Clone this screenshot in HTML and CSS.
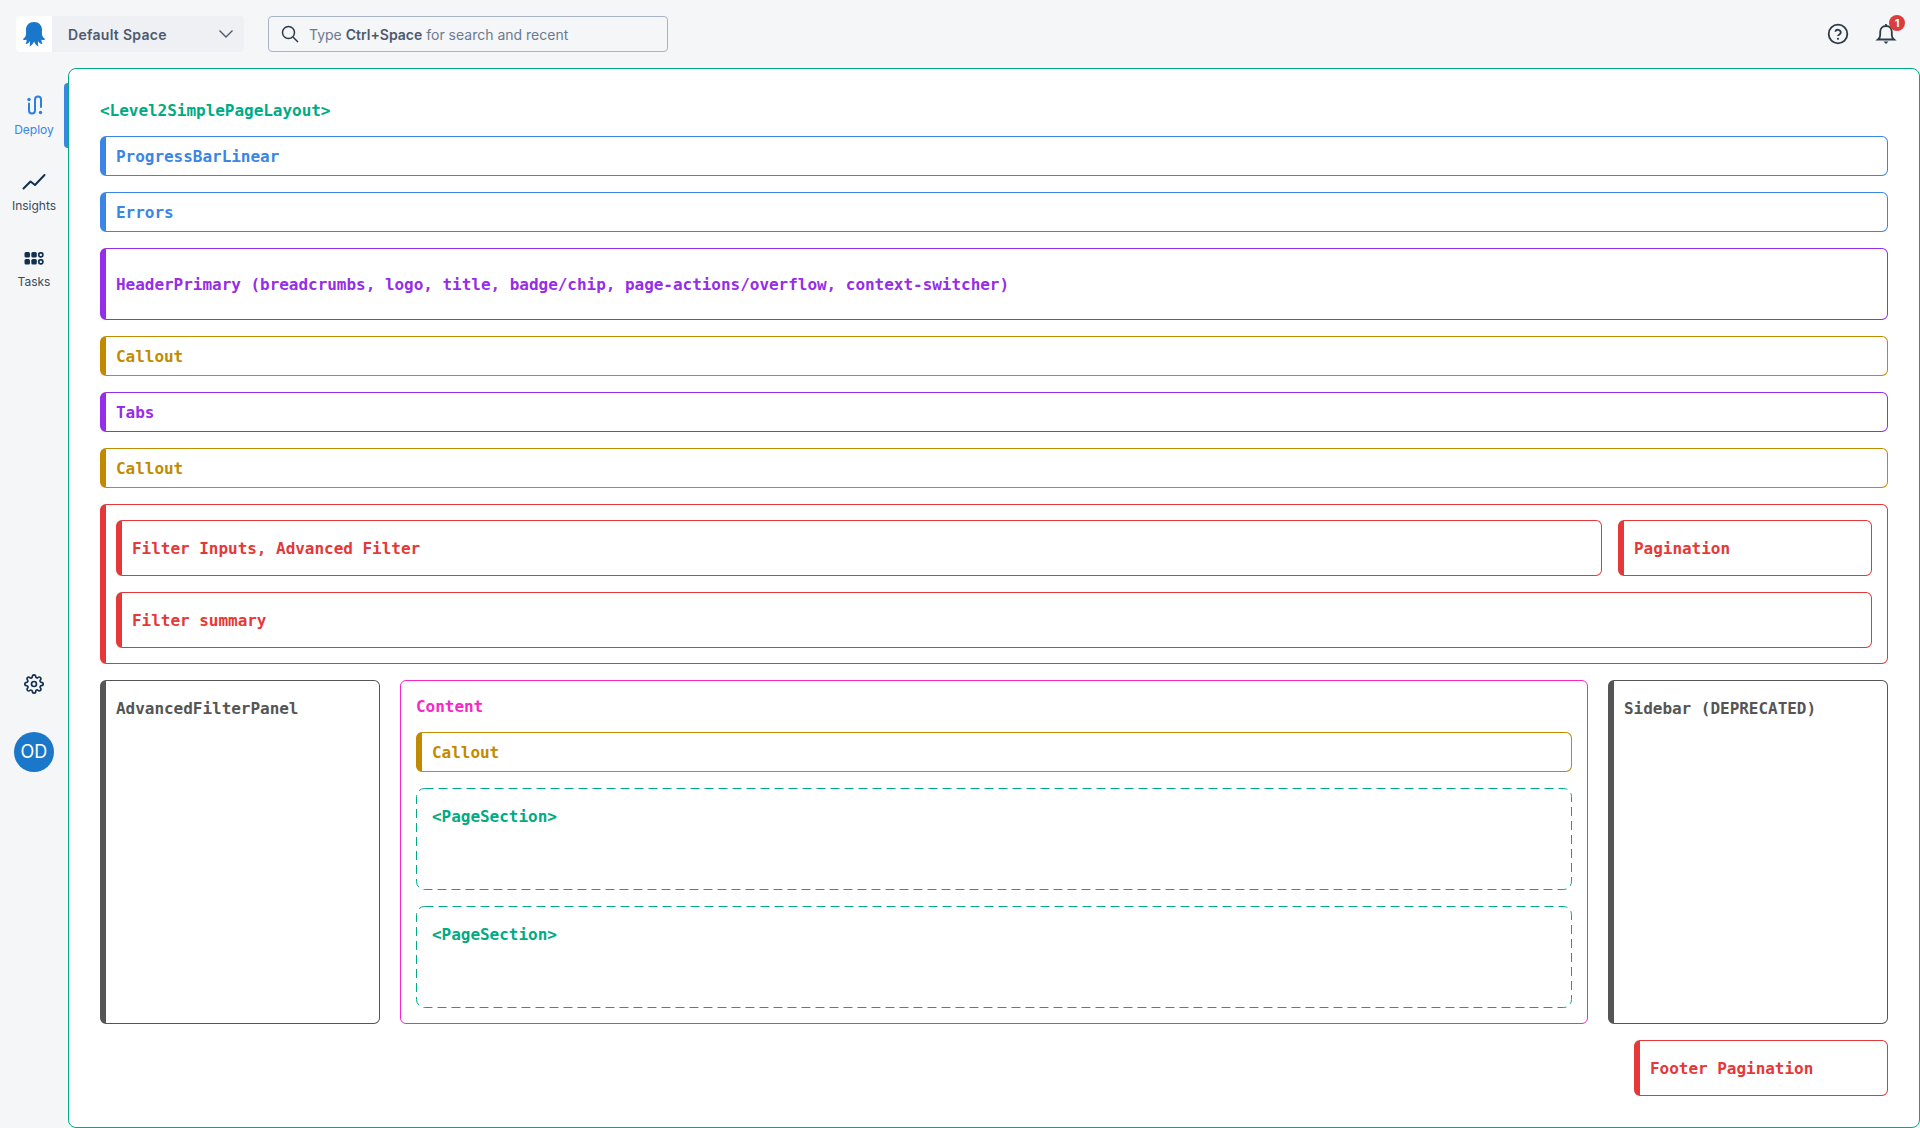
FILE: index.html
```html
<!DOCTYPE html>
<html lang="en">
<head>
<meta charset="utf-8">
<title>Level2SimplePageLayout</title>
<link rel="stylesheet" href="styles.css">
</head>
<body>
<header class="topbar">
  <div class="space-switch">
    <div class="logo">
      <svg width="22" height="26" viewBox="0 0 22 26"><path class="logo-shape" d="M11 1C16 1 19 4.500 19 9C19 12 18.500 14 20 16C20.600 17 21.500 17.500 22 18C22 19 20 19.500 18.500 18.500C18.200 20.500 19 22 19.500 23C18 23.500 15.500 21.500 15 20C14.800 22 15 24 15.500 25.500C13.800 25 12 23 11 20.500C10 23 8.200 25 6.500 25.500C7 24 7.200 22 7 20C6.500 21.500 4 23.500 2.500 23C3 22 3.800 20.500 3.500 18.500C2 19.500 0 19 0 18C.5 17.500 1.400 17 2 16C3.500 14 3 12 3 9C3 4.500 6 1 11 1Z"/></svg>
    </div>
    <div class="space-select">
      <span>Default Space</span>
      <svg width="16" height="16" viewBox="0 0 16 16"><path class="chevron" d="M1.500 4.500 8 11l6.500-6.500"/></svg>
    </div>
  </div>
  <div class="search">
    <svg width="18" height="18" viewBox="0 0 18 18"><circle class="ink" cx="7.500" cy="7.500" r="6"/><path class="ink" d="m12 12 5 5"/></svg>
    <span>Type <b>Ctrl+Space</b> for search and recent</span>
  </div>
  <div class="top-actions">
    <svg class="top-icon" width="22" height="22" viewBox="0 0 22 22"><circle class="ink2" cx="11" cy="11" r="9.300"/><path class="ink2" d="M8.200 8.600a2.900 2.900 0 0 1 5.600 1c0 1.900-2.800 2.100-2.800 3.300"/><circle class="dot" cx="11" cy="15.800" r="1.100"/></svg>
    <div class="bell-wrap">
      <svg width="22" height="24" viewBox="0 0 22 24"><path class="ink2" d="M3 17.500c1.300-1 2.200-2 2.200-4.500V10c0-3.400 2.400-6 5.800-6s5.800 2.600 5.800 6v3c0 2.500.9 3.500 2.200 4.500z"/><path class="ink2" d="M11 2v2"/><path class="dot" d="M8.500 19.500h5L11 22z"/></svg>
      <span class="badge">1</span>
    </div>
  </div>
</header>
<div class="workspace">
  <nav class="sidebar">
    <a class="nav-item active">
      <svg width="24" height="24" viewBox="0 0 24 24"><path class="stroke-blue" d="M7 9.500V16.500a3 3 0 0 0 6 0V5.500a3 3 0 0 1 6 0V13"/><circle class="fill-blue" cx="7" cy="5.500" r="1.700"/><circle class="fill-blue" cx="18.500" cy="18.500" r="1.700"/></svg>
      <span>Deploy</span>
    </a>
    <a class="nav-item">
      <svg width="24" height="24" viewBox="0 0 24 24"><path class="stroke-navy" d="M1.500 18.500 8.500 11.500l4.500 3.500L22.500 5"/></svg>
      <span>Insights</span>
    </a>
    <a class="nav-item">
      <svg width="24" height="24" viewBox="0 0 24 24"><rect class="fill-navy" x="2.500" y="5" width="5.500" height="5.500" rx="1.500"/><rect class="fill-navy" x="9.300" y="5" width="5.500" height="5.500" rx="1.500"/><rect class="stroke-thin" x="16.800" y="5.800" width="4" height="4" rx="1.500"/><rect class="fill-navy" x="2.500" y="12" width="5.500" height="5.500" rx="1.500"/><rect class="fill-navy" x="9.300" y="12" width="5.500" height="5.500" rx="1.500"/><rect class="stroke-thin" x="16.800" y="12.800" width="4" height="4" rx="1.500"/></svg>
      <span>Tasks</span>
    </a>
    <a class="settings">
      <svg width="20" height="20" viewBox="0 0 24 24"><circle class="stroke-gear" cx="12" cy="12" r="3"/><path class="stroke-gear" d="M19.400 15a1.650 1.650 0 0 0 .33 1.820l.06.06a2 2 0 0 1 0 2.830 2 2 0 0 1-2.830 0l-.06-.06a1.650 1.650 0 0 0-1.820-.33 1.650 1.650 0 0 0-1 1.510V21a2 2 0 0 1-2 2 2 2 0 0 1-2-2v-.09A1.650 1.650 0 0 0 9 19.400a1.650 1.650 0 0 0-1.820.33l-.06.06a2 2 0 0 1-2.830 0 2 2 0 0 1 0-2.830l.06-.06a1.650 1.650 0 0 0 .33-1.820 1.650 1.650 0 0 0-1.510-1H3a2 2 0 0 1-2-2 2 2 0 0 1 2-2h.09A1.650 1.650 0 0 0 4.600 9a1.650 1.650 0 0 0-.33-1.820l-.06-.06a2 2 0 0 1 0-2.830 2 2 0 0 1 2.830 0l.06.06a1.650 1.650 0 0 0 1.820.33H9a1.650 1.650 0 0 0 1-1.510V3a2 2 0 0 1 2-2 2 2 0 0 1 2 2v.09a1.650 1.650 0 0 0 1 1.510 1.650 1.650 0 0 0 1.820-.33l.06-.06a2 2 0 0 1 2.830 0 2 2 0 0 1 0 2.830l-.06.06a1.650 1.650 0 0 0-.33 1.820V9a1.650 1.650 0 0 0 1.510 1H21a2 2 0 0 1 2 2 2 2 0 0 1-2 2h-.09a1.650 1.650 0 0 0-1.510 1z"/></svg>
    </a>
    <div class="avatar">OD</div>
  </nav>
  <main class="panel">
    <div class="tag green">&lt;Level2SimplePageLayout&gt;</div>
    <div class="box blue">ProgressBarLinear</div>
    <div class="box blue">Errors</div>
    <div class="box purple tall">HeaderPrimary (breadcrumbs, logo, title, badge/chip, page-actions/overflow, context-switcher)</div>
    <div class="box gold">Callout</div>
    <div class="box purple">Tabs</div>
    <div class="box gold">Callout</div>
    <section class="box red filters">
      <div class="filter-row">
        <div class="box red mid grow">Filter Inputs, Advanced Filter</div>
        <div class="box red mid pager">Pagination</div>
      </div>
      <div class="box red mid">Filter summary</div>
    </section>
    <div class="columns">
      <aside class="box grey side">AdvancedFilterPanel</aside>
      <section class="content">
        <div class="tag pink">Content</div>
        <div class="box gold">Callout</div>
        <div class="page-section"><svg class="dash"><rect/></svg>&lt;PageSection&gt;</div>
        <div class="page-section"><svg class="dash"><rect/></svg>&lt;PageSection&gt;</div>
      </section>
      <aside class="box grey side">Sidebar (DEPRECATED)</aside>
    </div>
    <div class="box red mid pager footer-pager">Footer Pagination</div>
  </main>
</div>
</body>
</html>
```
FILE: styles.css
```css
* { box-sizing: border-box; }
html, body { height: 100%; }
body {
  margin: 0;
  background: #f4f6f8;
  font-family: Inter, "Noto Sans", sans-serif;
  display: flex;
  flex-direction: column;
  overflow: hidden;
}
svg { display: block; }

.topbar {
  height: 68px;
  flex: none;
  display: flex;
  align-items: center;
  padding: 0 16px;
}
.space-switch {
  display: flex;
  height: 36px;
  width: 228px;
  background: #eef0f3;
  border-radius: 4px;
  margin-right: 24px;
}
.logo {
  width: 36px;
  height: 36px;
  background: #fff;
  border-radius: 4px 0 0 4px;
  display: flex;
  align-items: center;
  justify-content: center;
}
.logo-shape { fill: #1a77ca; }
.space-select {
  flex: 1;
  display: flex;
  align-items: center;
  justify-content: space-between;
  padding: 0 10px 0 16px;
  font-size: 14px;
  font-weight: 600;
  letter-spacing: 0.3px;
  color: #4d5a6e;
}
.chevron { fill: none; stroke: #4d5a6e; stroke-width: 1.4; }
.search {
  width: 400px;
  height: 36px;
  border: 1px solid #a9b3c6;
  border-radius: 4px;
  display: flex;
  align-items: center;
  gap: 10px;
  padding: 0 12px;
  font-size: 14px;
  color: #6b7a8f;
}
.search b { font-weight: 600; color: #4d5a6e; }
.ink { fill: none; stroke: #2e3a48; stroke-width: 1.5; }
.ink2 { fill: none; stroke: #2e3a48; stroke-width: 1.8; }
.dot { fill: #2e3a48; }
.top-actions {
  margin-left: auto;
  display: flex;
  align-items: center;
  gap: 26px;
  padding-right: 7px;
}
.bell-wrap { position: relative; }
.badge {
  position: absolute;
  top: -7px;
  right: -8px;
  width: 16px;
  height: 16px;
  border-radius: 50%;
  background: #d93d3d;
  color: #fff;
  font-size: 11px;
  font-weight: 700;
  line-height: 16px;
  text-align: center;
}

.workspace { flex: 1; display: flex; min-height: 0; }
.sidebar {
  width: 68px;
  flex: none;
  display: flex;
  flex-direction: column;
  align-items: center;
  padding-top: 15px;
  gap: 11px;
}
.nav-item {
  position: relative;
  width: 68px;
  height: 65px;
  padding-top: 11px;
  display: flex;
  flex-direction: column;
  align-items: center;
  gap: 4px;
  font-size: 12px;
  line-height: 16px;
  color: #3c4a5c;
}
.nav-item:nth-child(3) svg { transform: translateY(1px); }
.nav-item.active { color: #3a85e6; }
.nav-item.active::after {
  content: "";
  position: absolute;
  right: 0;
  top: 0;
  bottom: 0;
  width: 4px;
  background: #3a85e6;
  border-radius: 4px 0 0 4px;
}
.stroke-blue { fill: none; stroke: #2f7fdc; stroke-width: 2; stroke-linecap: round; }
.fill-blue { fill: #2f7fdc; }
.stroke-navy { fill: none; stroke: #12304f; stroke-width: 2; stroke-linecap: round; stroke-linejoin: round; }
.fill-navy { fill: #12304f; }
.stroke-thin { fill: none; stroke: #12304f; stroke-width: 1.8; }
.stroke-gear { fill: none; stroke: #12304f; stroke-width: 2; }
.settings { margin-top: 353px; height: 40px; display: flex; align-items: center; }
.avatar {
  margin-top: 17px;
  width: 40px;
  height: 40px;
  border-radius: 50%;
  background: #1a77ca;
  color: #fff;
  font-size: 18px;
  line-height: 40px;
  text-align: center;
}

.panel {
  flex: 1;
  min-width: 0;
  background: #fff;
  border: 1px solid #00ab84;
  border-radius: 8px;
  padding: 31px;
  display: flex;
  flex-direction: column;
  gap: 16px;
  font-family: "DejaVu Sans Mono", "Liberation Mono", monospace;
  font-size: 16px;
  font-weight: 700;
  letter-spacing: -0.03px;
}
.tag { line-height: 18px; padding-top: 2px; }
.green { color: #00ab84; }
.pink { color: #f926c6; }

.box {
  --c: #3a85e6;
  border: 1px solid var(--c);
  border-left-width: 6px;
  border-radius: 6px;
  color: var(--c);
  padding: 8px 10px 6px;
  line-height: 24px;
}
.blue { --c: #3a85e6; }
.purple { --c: #962de8; }
.gold { --c: #c28a00; }
.red { --c: #e53838; }
.grey { --c: #555; }
.tall { padding-top: 24px; padding-bottom: 22px; }
.mid { padding-top: 16px; padding-bottom: 14px; }

.filters {
  padding: 15px;
  padding-left: 10px;
  display: flex;
  flex-direction: column;
  gap: 16px;
}
.filter-row { display: flex; gap: 16px; }
.grow { flex: 1; }
.pager { width: 254px; flex: none; }
.footer-pager { align-self: flex-end; }

.columns { display: flex; gap: 20px; }
.side { width: 280px; flex: none; padding-top: 16px; }
.content {
  flex: 1;
  min-width: 0;
  border: 1px solid #f926c6;
  border-radius: 6px;
  padding: 15px;
  display: flex;
  flex-direction: column;
  gap: 16px;
}
.page-section {
  position: relative;
  height: 102px;
  border-radius: 8px;
  padding: 19px 16px;
  line-height: 20px;
  color: #00ab84;
}
.dash {
  position: absolute;
  inset: 0;
  width: 100%;
  height: 100%;
}
.dash rect {
  x: 0.5px;
  y: 0.5px;
  width: calc(100% - 1px);
  height: calc(100% - 1px);
  rx: 8px;
  fill: none;
  stroke: #00ab84;
  stroke-width: 1;
  stroke-dasharray: 9 5;
}
```
